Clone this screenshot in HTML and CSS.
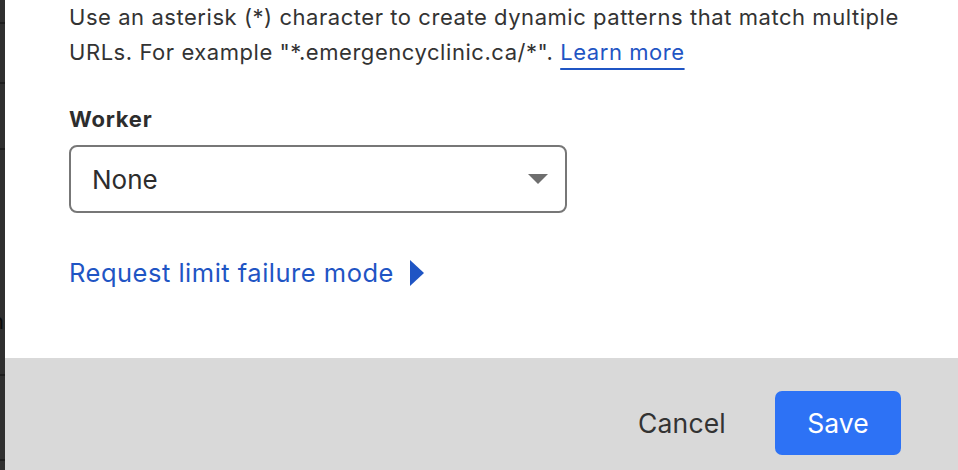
FILE: index.html
```html
<!DOCTYPE html>
<html>
<head>
<meta charset="utf-8">
<link rel="stylesheet" href="styles.css">
</head>
<body>
<div class="page">
  <div class="strip">
    <div class="seg s1"></div>
    <div class="seg s2"></div>
    <div class="seg s3"></div>
    <div class="seg s4"><span class="cut">n</span></div>
    <div class="seg s5"></div>
    <div class="seg s6"></div>
  </div>
  <div class="panel">
    <div class="content">
      <p class="help">Use an asterisk (*) character to create dynamic patterns that match multiple URLs. For example "*.emergencyclinic.ca/*". <a class="learn" href="#">Learn more</a></p>
      <label class="label">Worker</label>
      <div class="select">
        <span class="value">None</span>
        <svg class="caret" width="20" height="10" viewBox="0 0 20 10"><path d="M0 0 H20 L10 10 Z" fill="#6e6e6e"/></svg>
      </div>
      <a class="toggle" href="#">Request limit failure mode
        <svg class="play" width="14" height="26" viewBox="0 0 14 26"><path d="M0 0 L14 13 L0 26 Z" fill="#1f55c4"/></svg>
      </a>
    </div>
    <div class="footer">
      <button class="btn cancel">Cancel</button>
      <button class="btn save">Save</button>
    </div>
  </div>
</div>
</body>
</html>
```
FILE: styles.css
```css
html, body {
  margin: 0;
  padding: 0;
  background: #fff;
}
.page {
  display: flex;
  width: 958px;
  height: 470px;
  overflow: hidden;
  font-family: Inter, "Noto Sans", sans-serif;
}
.strip {
  width: 5px;
  flex: none;
  background: #2f2f2f;
  display: flex;
  flex-direction: column;
  overflow: hidden;
}
.seg {
  flex: none;
  border-bottom: 2px solid #1e1e1e;
  box-sizing: border-box;
  position: relative;
}
.s1 { height: 24px; }
.s2 { height: 60px; }
.s3 { height: 66px; }
.s4 { height: 226px; }
.s5 { height: 85px; }
.s6 { height: 20px; border-bottom: none; }
.cut {
  position: absolute;
  right: 1px;
  top: 160px;
  font-size: 22px;
  line-height: 22px;
  color: #0b0b0b;
  font-family: Inter, sans-serif;
}
.panel {
  flex: 1;
  min-width: 0;
  display: flex;
  flex-direction: column;
  background: #fff;
}
.content {
  flex: 1;
  padding: 0 20px 0 64px;
  display: flex;
  flex-direction: column;
  align-items: flex-start;
}
.help {
  margin: 0;
  max-width: 860px;
  font-size: 22px;
  letter-spacing: 0.55px;
  line-height: 35px;
  color: #333;
}
.learn {
  color: #1f55c4;
  text-decoration: underline;
  text-decoration-thickness: 2px;
  text-underline-offset: 8px;
}
.label {
  margin-top: 35px;
  font-size: 22px;
  letter-spacing: 0.75px;
  font-weight: 700;
  line-height: 28px;
  color: #2d2d2d;
}
.select {
  margin-top: 12px;
  width: 498px;
  height: 68px;
  flex: none;
  box-sizing: border-box;
  border: 2px solid #777;
  border-radius: 8px;
  display: flex;
  align-items: center;
  justify-content: space-between;
  padding: 0 17px 0 21px;
}
.value {
  font-size: 26px;
  color: #2d2d2d;
}
.toggle {
  margin-top: 44px;
  display: flex;
  align-items: center;
  gap: 16px;
  font-size: 25.5px;
  letter-spacing: 0.5px;
  color: #1f55c4;
  text-decoration: none;
  line-height: 32px;
}
.footer {
  height: 112px;
  flex: none;
  box-sizing: border-box;
  background: #d9d9d9;
  display: flex;
  align-items: flex-start;
  justify-content: flex-end;
  padding: 33px 57px 0 0;
  gap: 49px;
}
.btn {
  font-family: Inter, "Noto Sans", sans-serif;
  font-size: 26.5px;
  border: none;
  cursor: pointer;
}
.cancel {
  background: transparent;
  color: #333;
  padding: 0;
  height: 64px;
  letter-spacing: 0.2px;
}
.save {
  background: #2d72f5;
  color: #fff;
  width: 126px;
  height: 64px;
  border-radius: 7px;
}
```
